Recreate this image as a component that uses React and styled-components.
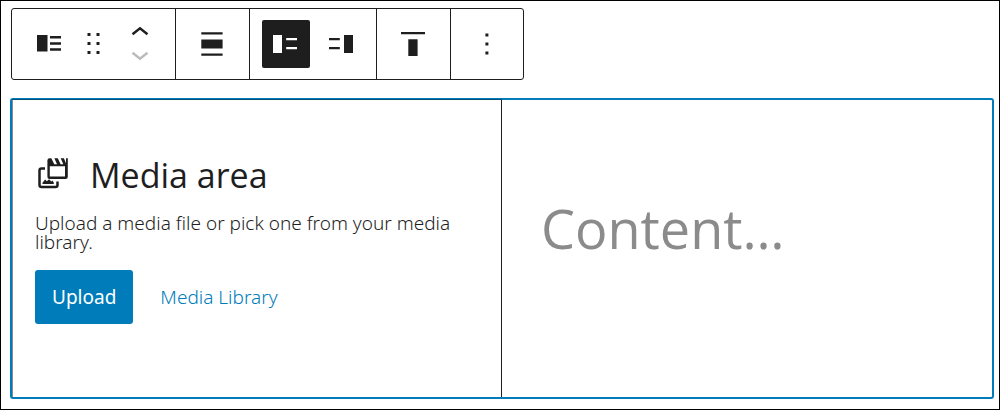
import React, { useState } from 'react';
import styled, { createGlobalStyle } from 'styled-components';

const GlobalStyle = createGlobalStyle`
    * {
        box-sizing: border-box;
    }
    body {
        margin: 0;
        background: #fff;
    }
    button,
    input {
        font: inherit;
    }
`;

const Editor = styled.main`
    display: flex;
    flex-direction: column;
    align-items: flex-start;
    gap: 18px;
    min-height: 100vh;
    padding: 7px 5px 10px 9px;
    border: 1px solid #000;
    color: #1e1e1e;
    font-family: 'Noto Sans', 'Open Sans', sans-serif;
`;

const Toolbar = styled.div`
    display: flex;
    margin-left: 1px;
    border: 1px solid #1e1e1e;
    border-radius: 3px;
`;

const ToolbarGroup = styled.div`
    display: flex;
    align-items: center;
    gap: ${(props) => props.$gap || 0};
    padding: 11px ${(props) => (props.$single ? '13px' : '12px')} 11px 12px;
    border-right: 1px solid #1e1e1e;

    &:last-child {
        padding-right: 12px;
        border-right: 0;
    }
`;

const ToolbarButton = styled.button`
    display: flex;
    align-items: center;
    justify-content: center;
    width: ${(props) => (props.$narrow ? '43px' : '48px')};
    height: 48px;
    padding: 0;
    border: 0;
    border-radius: 2px;
    background: ${(props) => (props.$active ? '#1e1e1e' : 'transparent')};
    color: ${(props) => (props.$active ? '#fff' : '#1e1e1e')};
    cursor: pointer;
`;

const Movers = styled.div`
    display: flex;
    flex-direction: column;
    width: 48px;
`;

const MoverButton = styled(ToolbarButton)`
    height: 24px;

    &:disabled {
        color: #bbb;
        cursor: default;
    }
`;

const Icon = styled.svg`
    display: block;
    width: 36px;
    height: ${(props) => (props.$short ? '24px' : '36px')};
    fill: currentColor;
`;

const Block = styled.section`
    display: grid;
    flex: 1;
    grid-template-columns: 1fr 1fr;
    width: 100%;
    border: 2px solid #007cba;
    border-radius: 3px;
`;

const Placeholder = styled.div`
    display: flex;
    flex-direction: column;
    justify-content: center;
    align-items: flex-start;
    padding: 0 22px 22px;
    border-right: 1px solid #1e1e1e;
    border-left: 1px solid #8a8a8a;
    box-shadow: 0 -1px 0 #00507a;
`;

const Title = styled.h2`
    display: flex;
    align-items: center;
    gap: 19px;
    margin: 0 0 15px;
    font-family: 'Open Sans', 'Noto Sans', sans-serif;
    font-size: 34px;
    font-weight: 400;
    line-height: 48px;
`;

const Instructions = styled.p`
    margin: 0 0 18px;
    font-size: 19px;
    font-weight: 300;
    line-height: 19px;
`;

const Actions = styled.div`
    display: flex;
    gap: 10px;
`;

const ActionButton = styled.button`
    height: 54px;
    padding: 0 17px;
    border: 0;
    border-radius: 3px;
    background: ${(props) => (props.$primary ? '#007cba' : 'transparent')};
    color: ${(props) => (props.$primary ? '#fff' : '#007cba')};
    font-size: 19px;
    font-weight: ${(props) => (props.$primary ? 400 : 300)};
    cursor: pointer;
`;

const Content = styled.div`
    display: flex;
    align-items: center;
    padding: 0 39px;
`;

const ContentInput = styled.input`
    width: 100%;
    height: 80px;
    margin-bottom: 42px;
    padding: 0;
    border: 0;
    outline: 0;
    background: transparent;
    color: #1e1e1e;
    font-family: 'Open Sans', 'Noto Sans', sans-serif;
    font-size: 54px;

    &::placeholder {
        color: #8b8b8b;
        opacity: 1;
    }
`;

const MediaTextIcon = () => (
    <Icon viewBox="0 0 36 36" aria-hidden="true">
        <path d="M7 9h10.5v16.5H7zM20 10h11v2.5H20zM20 16.2h11v2.5H20zM20 22.3h11v2.5H20z" />
    </Icon>
);

const DragIcon = () => (
    <Icon viewBox="0 0 36 36" aria-hidden="true">
        <path d="M11.5 7h3v3h-3zM20.5 7h3v3h-3zM11.5 16h3v3h-3zM20.5 16h3v3h-3zM11.5 25h3v3h-3zM20.5 25h3v3h-3z" />
    </Icon>
);

const AlignIcon = () => (
    <Icon viewBox="0 0 36 36" aria-hidden="true">
        <path d="M7.3 6.2h21.3v2.3H7.3zM7.3 13.4h21.3v9.2H7.3zM7.3 27.5h21.3v2.3H7.3z" />
    </Icon>
);

const MediaLeftIcon = () => (
    <Icon viewBox="0 0 36 36" aria-hidden="true">
        <path d="M5 9h9v18H5zM18.2 12h10.8v2.3H18.2zM18.2 21h10.8v2.3H18.2z" />
    </Icon>
);

const MediaRightIcon = () => (
    <Icon viewBox="0 0 36 36" aria-hidden="true">
        <path d="M22 9h9v18h-9zM7 12h10.8v2.3H7zM7 21h10.8v2.3H7z" />
    </Icon>
);

const AlignTopIcon = () => (
    <Icon viewBox="0 0 36 36" aria-hidden="true">
        <path d="M6 6h24v2.3H6zM13.3 13.3h9.3V30h-9.3z" />
    </Icon>
);

const MoreIcon = () => (
    <Icon viewBox="0 0 36 36" aria-hidden="true">
        <path d="M16.4 7.4h3v3h-3zM16.4 16.4h3v3h-3zM16.4 25.4h3v3h-3z" />
    </Icon>
);

const ChevronIcon = ({ d }) => (
    <Icon $short viewBox="0 0 36 24" aria-hidden="true">
        <path d={d} fill="none" stroke="currentColor" strokeWidth="2.4" />
    </Icon>
);

const MediaIcon = () => (
    <Icon viewBox="0 0 36 36" aria-hidden="true">
        <path
            d="M14.5 1.3h1.8l3 6h2.7l-2.6-6h3.4l2.8 6h2.7l-2.6-6h3.2l2.1 5v-5h1.8v18.5q0 2.200-2.200 2.200h-16q-2.200 0-2.200-2.200v-16.300q0-2.200 2.200-2.200zM14.800 9.300v10.200h15.200V9.300z"
            fillRule="evenodd"
        />
        <path
            d="M10 11.500H6.500q-2 0-2 2v14.600q0 2 2 2h14q2 0 2-2V24.500"
            fill="none"
            stroke="currentColor"
            strokeWidth="2.500"
        />
        <path d="M7.500 27v-1.200l2.600-3.300 1.800 1.800 2.200-2 2.100 2.200 1.200-1 1.400 2.300V27z" />
    </Icon>
);

function App() {
    const [side, setSide] = useState('left');
    const [content, setContent] = useState('');

    return (
        <>
            <GlobalStyle />
            <Editor>
                <Toolbar role="toolbar" aria-label="Block tools">
                    <ToolbarGroup>
                        <ToolbarButton type="button" aria-label="Media & Text">
                            <MediaTextIcon />
                        </ToolbarButton>
                        <ToolbarButton type="button" $narrow aria-label="Drag">
                            <DragIcon />
                        </ToolbarButton>
                        <Movers>
                            <MoverButton type="button" aria-label="Move up">
                                <ChevronIcon d="M11.500 14.300 19 8.200 26.500 14.300" />
                            </MoverButton>
                            <MoverButton type="button" disabled aria-label="Move down">
                                <ChevronIcon d="M11.500 8.700 19 14.800 26.500 8.700" />
                            </MoverButton>
                        </Movers>
                    </ToolbarGroup>
                    <ToolbarGroup $single>
                        <ToolbarButton type="button" aria-label="Align">
                            <AlignIcon />
                        </ToolbarButton>
                    </ToolbarGroup>
                    <ToolbarGroup $gap="6px">
                        <ToolbarButton
                            type="button"
                            $active={side === 'left'}
                            aria-pressed={side === 'left'}
                            aria-label="Show media on left"
                            onClick={() => setSide('left')}
                        >
                            <MediaLeftIcon />
                        </ToolbarButton>
                        <ToolbarButton
                            type="button"
                            $active={side === 'right'}
                            aria-pressed={side === 'right'}
                            aria-label="Show media on right"
                            onClick={() => setSide('right')}
                        >
                            <MediaRightIcon />
                        </ToolbarButton>
                    </ToolbarGroup>
                    <ToolbarGroup $single>
                        <ToolbarButton type="button" aria-label="Vertical alignment">
                            <AlignTopIcon />
                        </ToolbarButton>
                    </ToolbarGroup>
                    <ToolbarGroup>
                        <ToolbarButton type="button" aria-label="Options">
                            <MoreIcon />
                        </ToolbarButton>
                    </ToolbarGroup>
                </Toolbar>
                <Block>
                    <Placeholder>
                        <Title>
                            <MediaIcon />
                            Media area
                        </Title>
                        <Instructions>
                            Upload a media file or pick one from your media library.
                        </Instructions>
                        <Actions>
                            <ActionButton type="button" $primary>
                                Upload
                            </ActionButton>
                            <ActionButton type="button">Media Library</ActionButton>
                        </Actions>
                    </Placeholder>
                    <Content>
                        <ContentInput
                            type="text"
                            aria-label="Content"
                            placeholder="Content…"
                            value={content}
                            onChange={(e) => setContent(e.target.value)}
                        />
                    </Content>
                </Block>
            </Editor>
        </>
    );
}

export default App;
